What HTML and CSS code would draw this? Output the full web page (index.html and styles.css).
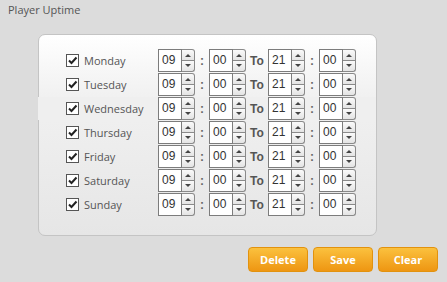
FILE: index.html
```html
<!DOCTYPE html>
<html>
<head>
<meta charset="utf-8">
<link rel="stylesheet" href="styles.css">
</head>
<body>
<div class="title">Player Uptime</div>
<div class="panel">
  <div class="row"><span class="cb"><svg width="11" height="11" viewBox="0 0 11 11"><path d="M2 5.5 L4.5 8 L9.5 2.5" fill="none" stroke="#222" stroke-width="2"/></svg></span><span class="day">Monday</span><span class="num">09</span><span class="spin"><i class="up"></i><i class="dn"></i></span><span class="colon">:</span><span class="num">00</span><span class="spin"><i class="up"></i><i class="dn"></i></span><span class="to">To</span><span class="num">21</span><span class="spin"><i class="up"></i><i class="dn"></i></span><span class="colon">:</span><span class="num">00</span><span class="spin"><i class="up"></i><i class="dn"></i></span></div>
  <div class="row"><span class="cb"><svg width="11" height="11" viewBox="0 0 11 11"><path d="M2 5.5 L4.5 8 L9.5 2.5" fill="none" stroke="#222" stroke-width="2"/></svg></span><span class="day">Tuesday</span><span class="num">09</span><span class="spin"><i class="up"></i><i class="dn"></i></span><span class="colon">:</span><span class="num">00</span><span class="spin"><i class="up"></i><i class="dn"></i></span><span class="to">To</span><span class="num">21</span><span class="spin"><i class="up"></i><i class="dn"></i></span><span class="colon">:</span><span class="num">00</span><span class="spin"><i class="up"></i><i class="dn"></i></span></div>
  <div class="row hover"><span class="cb"><svg width="11" height="11" viewBox="0 0 11 11"><path d="M2 5.5 L4.5 8 L9.5 2.5" fill="none" stroke="#222" stroke-width="2"/></svg></span><span class="day">Wednesday</span><span class="num">09</span><span class="spin"><i class="up"></i><i class="dn"></i></span><span class="colon">:</span><span class="num">00</span><span class="spin"><i class="up"></i><i class="dn"></i></span><span class="to">To</span><span class="num">21</span><span class="spin"><i class="up"></i><i class="dn"></i></span><span class="colon">:</span><span class="num">00</span><span class="spin"><i class="up"></i><i class="dn"></i></span></div>
  <div class="row"><span class="cb"><svg width="11" height="11" viewBox="0 0 11 11"><path d="M2 5.5 L4.5 8 L9.5 2.5" fill="none" stroke="#222" stroke-width="2"/></svg></span><span class="day">Thursday</span><span class="num">09</span><span class="spin"><i class="up"></i><i class="dn"></i></span><span class="colon">:</span><span class="num">00</span><span class="spin"><i class="up"></i><i class="dn"></i></span><span class="to">To</span><span class="num">21</span><span class="spin"><i class="up"></i><i class="dn"></i></span><span class="colon">:</span><span class="num">00</span><span class="spin"><i class="up"></i><i class="dn"></i></span></div>
  <div class="row"><span class="cb"><svg width="11" height="11" viewBox="0 0 11 11"><path d="M2 5.5 L4.5 8 L9.5 2.5" fill="none" stroke="#222" stroke-width="2"/></svg></span><span class="day">Friday</span><span class="num">09</span><span class="spin"><i class="up"></i><i class="dn"></i></span><span class="colon">:</span><span class="num">00</span><span class="spin"><i class="up"></i><i class="dn"></i></span><span class="to">To</span><span class="num">21</span><span class="spin"><i class="up"></i><i class="dn"></i></span><span class="colon">:</span><span class="num">00</span><span class="spin"><i class="up"></i><i class="dn"></i></span></div>
  <div class="row"><span class="cb"><svg width="11" height="11" viewBox="0 0 11 11"><path d="M2 5.5 L4.5 8 L9.5 2.5" fill="none" stroke="#222" stroke-width="2"/></svg></span><span class="day">Saturday</span><span class="num">09</span><span class="spin"><i class="up"></i><i class="dn"></i></span><span class="colon">:</span><span class="num">00</span><span class="spin"><i class="up"></i><i class="dn"></i></span><span class="to">To</span><span class="num">21</span><span class="spin"><i class="up"></i><i class="dn"></i></span><span class="colon">:</span><span class="num">00</span><span class="spin"><i class="up"></i><i class="dn"></i></span></div>
  <div class="row"><span class="cb"><svg width="11" height="11" viewBox="0 0 11 11"><path d="M2 5.5 L4.5 8 L9.5 2.5" fill="none" stroke="#222" stroke-width="2"/></svg></span><span class="day">Sunday</span><span class="num">09</span><span class="spin"><i class="up"></i><i class="dn"></i></span><span class="colon">:</span><span class="num">00</span><span class="spin"><i class="up"></i><i class="dn"></i></span><span class="to">To</span><span class="num">21</span><span class="spin"><i class="up"></i><i class="dn"></i></span><span class="colon">:</span><span class="num">00</span><span class="spin"><i class="up"></i><i class="dn"></i></span></div>
</div>
<div class="actions">
  <button class="btn">Delete</button>
  <button class="btn">Save</button>
  <button class="btn">Clear</button>
</div>
</body>
</html>
```
FILE: styles.css
```css
html, body { margin: 0; padding: 0; }
body {
  background: #dcdcdc;
  width: 447px;
  height: 282px;
  overflow: hidden;
  font-family: "Open Sans", "DejaVu Sans", sans-serif;
}
.title {
  font-size: 11px;
  color: #555;
  padding: 2px 0 0 8px;
  height: 34px;
  box-sizing: border-box;
}
.panel {
  margin-left: 38px;
  width: 339px;
  height: 202px;
  box-sizing: border-box;
  border: 1px solid #c4c4c4;
  border-radius: 7px;
  background: linear-gradient(#ffffff, #f1f1f1 30%, #e6e6e6);
  padding: 14px 0 0 0;
}
.row {
  display: flex;
  align-items: center;
  height: 23px;
  margin-bottom: 1px;
  padding-left: 27px;
}
.row.hover { background: #efefef; margin-left: -1px; padding-left: 28px; }
.cb {
  width: 13px;
  height: 13px;
  box-sizing: border-box;
  border: 1px solid #555;
  background: #fff;
  display: flex;
  align-items: center;
  justify-content: center;
}
.day {
  font-size: 11px;
  color: #555;
  margin-left: 5px;
  width: 74px;
}
.num {
  width: 24px;
  height: 23px;
  box-sizing: border-box;
  border: 1px solid #7c7c7c;
  background: #fff;
  font-family: "Liberation Sans", Arial, sans-serif;
  font-size: 12px;
  color: #333;
  line-height: 21px;
  padding-left: 3px;
}
.spin {
  width: 13px;
  height: 23px;
  box-sizing: border-box;
  display: flex;
  flex-direction: column;
}
.spin i {
  flex: 1;
  border: 1px solid #8a8a8a;
  border-left: none;
  background: linear-gradient(#fafafa, #e4e4e4);
  position: relative;
}
.spin i.up { border-radius: 0 3px 0 0; }
.spin i.dn { border-top: none; border-radius: 0 0 3px 0; }
.spin i::after {
  content: "";
  position: absolute;
  left: 3px;
  top: 4px;
  border-left: 3px solid transparent;
  border-right: 3px solid transparent;
}
.spin i.up::after { border-bottom: 3px solid #444; top: 4px; }
.spin i.dn::after { border-top: 3px solid #444; top: 3px; }
.colon {
  width: 14px;
  text-align: center;
  font-family: "Liberation Sans", Arial, sans-serif;
  font-size: 12px;
  font-weight: bold;
  color: #666;
}
.to {
  width: 22px;
  text-align: center;
  font-family: "Liberation Sans", Arial, sans-serif;
  font-size: 12px;
  font-weight: bold;
  color: #555;
}
.actions {
  display: flex;
  justify-content: flex-end;
  gap: 5px;
  padding: 11px 9px 0 0;
}
.btn {
  width: 60px;
  height: 25px;
  border: 1px solid #e2920e;
  border-radius: 4px;
  background: linear-gradient(#fbc13e, #ee9612);
  color: #fff;
  font-family: "Open Sans", "DejaVu Sans", sans-serif;
  font-size: 11px;
  font-weight: bold;
  padding: 0;
}
```
